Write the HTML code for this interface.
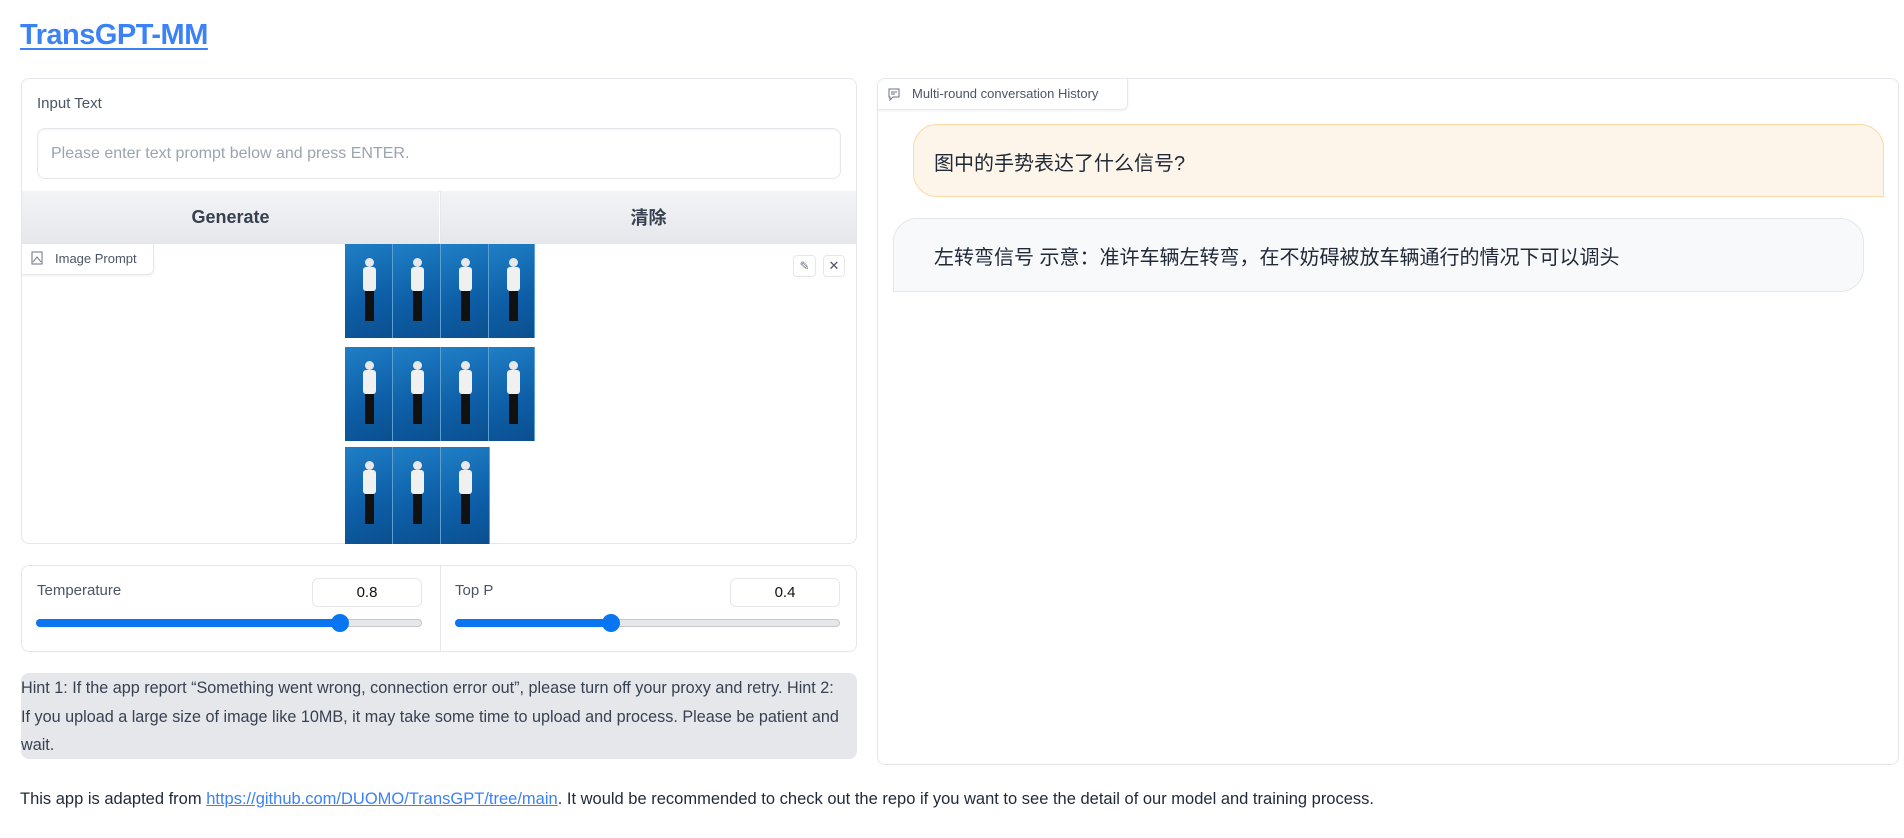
<!DOCTYPE html>
<html><head><meta charset="utf-8"><style>
*{box-sizing:border-box;margin:0;padding:0}
body{width:1904px;height:838px;background:#fff;font-family:"Liberation Sans","Noto Sans CJK SC",sans-serif;color:#1f2937;position:relative;overflow:hidden}
.abs{position:absolute}
h1{position:absolute;left:20px;top:19px;font-size:29px;font-weight:bold;color:#3b82f6;text-decoration:underline;text-underline-offset:4px;letter-spacing:-0.5px}
.panel{position:absolute;border:1px solid #e5e7eb;border-radius:8px;background:#fff}
.lbl{font-size:15px;color:#4b5563}
.btn{position:absolute;top:191px;height:52px;background:linear-gradient(#f3f4f6,#e5e7eb);display:flex;align-items:center;justify-content:center;font-size:18px;font-weight:bold;color:#374151}
.img{position:absolute;width:48px;background:linear-gradient(160deg,#1f7fc6,#0d5ea6 60%,#0b4f8f);overflow:hidden;border-right:1px solid #5aa0d0}
.fig{position:absolute;left:18px;top:14px;width:13px;height:60px}
.fig .h{position:absolute;left:2px;top:0;width:9px;height:9px;border-radius:50%;background:#e8e8e8}
.fig .b{position:absolute;left:0;top:9px;width:13px;height:24px;background:#f0f0f0;border-radius:3px}
.fig .l{position:absolute;left:2px;top:33px;width:9px;height:30px;background:#111}
.num{position:absolute;width:110px;height:29px;border:1px solid #e5e7eb;border-radius:6px;text-align:center;font-size:15px;line-height:28px;color:#111}
.track{position:absolute;height:8px;border-radius:4px;background:#e5e7eb;border:1px solid #c8c8c8}
.fill{position:absolute;height:8px;border-radius:4px;background:#0a75f0}
.thumb{position:absolute;width:18px;height:18px;border-radius:50%;background:#0a75f0}
</style></head><body>
<h1>TransGPT-MM</h1>

<div class="panel" style="left:21px;top:78px;width:836px;height:466px;overflow:hidden">
  <div class="lbl abs" style="left:15px;top:16px">Input Text</div>
  <div class="abs" style="left:15px;top:49px;width:804px;height:51px;border:1px solid #e5e7eb;border-radius:8px;box-shadow:inset 0 1px 2px rgba(0,0,0,.05);font-size:16px;color:#9ca3af;padding:16px 13px">Please enter text prompt below and press ENTER.</div>
  <div class="abs" style="left:0;top:112px;width:836px;height:1px;background:#e5e7eb"></div>
</div>
<div class="btn" style="left:22px;width:417px">Generate</div>
<div class="btn" style="left:440px;width:416px;border-left:1px solid #e5e7eb">清除</div>
<div class="abs" style="left:21px;top:243px;width:836px;height:1px;background:#e5e7eb"></div>
<div class="abs" style="left:21px;top:244px;width:133px;height:31px;border:1px solid #e5e7eb;border-top:none;border-left:none;border-radius:0 0 6px 0;box-shadow:0 1px 2px rgba(0,0,0,.06);font-size:13px;color:#4b5563;padding:7px 0 0 34px">Image Prompt</div>
<svg class="abs" style="left:31px;top:251px" width="12" height="14" viewBox="0 0 12 14"><rect x="1" y="1" width="10" height="12" fill="none" stroke="#6b7280"/><path d="M2 11 L6 6 L10 11" fill="none" stroke="#6b7280"/></svg>
<div class="abs" style="left:793px;top:255px;width:23px;height:22px;border:1px solid #e5e7eb;border-radius:4px;font-size:12px;color:#6b7280;text-align:center;line-height:20px">✎</div>
<div class="abs" style="left:823px;top:255px;width:22px;height:22px;border:1px solid #e5e7eb;border-radius:4px;font-size:13px;color:#4b5563;text-align:center;line-height:20px">✕</div>

<div class="img" style="left:345px;top:244px;height:94px"><div class="fig"><div class="h"></div><div class="b"></div><div class="l"></div></div></div>
<div class="img" style="left:393px;top:244px;height:94px"><div class="fig"><div class="h"></div><div class="b"></div><div class="l"></div></div></div>
<div class="img" style="left:441px;top:244px;height:94px"><div class="fig"><div class="h"></div><div class="b"></div><div class="l"></div></div></div>
<div class="img" style="left:489px;top:244px;height:94px;width:46px"><div class="fig"><div class="h"></div><div class="b"></div><div class="l"></div></div></div>
<div class="img" style="left:345px;top:347px;height:94px"><div class="fig"><div class="h"></div><div class="b"></div><div class="l"></div></div></div>
<div class="img" style="left:393px;top:347px;height:94px"><div class="fig"><div class="h"></div><div class="b"></div><div class="l"></div></div></div>
<div class="img" style="left:441px;top:347px;height:94px"><div class="fig"><div class="h"></div><div class="b"></div><div class="l"></div></div></div>
<div class="img" style="left:489px;top:347px;height:94px;width:46px"><div class="fig"><div class="h"></div><div class="b"></div><div class="l"></div></div></div>
<div class="img" style="left:345px;top:447px;height:97px"><div class="fig"><div class="h"></div><div class="b"></div><div class="l"></div></div></div>
<div class="img" style="left:393px;top:447px;height:97px"><div class="fig"><div class="h"></div><div class="b"></div><div class="l"></div></div></div>
<div class="img" style="left:441px;top:447px;height:97px;width:49px"><div class="fig"><div class="h"></div><div class="b"></div><div class="l"></div></div></div>

<div class="panel" style="left:21px;top:565px;width:836px;height:87px">
  <div class="abs" style="left:418px;top:0;width:1px;height:86px;background:#e5e7eb"></div>
  <div class="lbl abs" style="left:15px;top:16px">Temperature</div>
  <div class="lbl abs" style="left:433px;top:16px">Top P</div>
</div>
<div class="num" style="left:312px;top:578px">0.8</div>
<div class="num" style="left:730px;top:578px">0.4</div>
<div class="track" style="left:36px;top:619px;width:386px"></div>
<div class="fill" style="left:36px;top:619px;width:305px"></div>
<div class="thumb" style="left:331px;top:614px"></div>
<div class="track" style="left:455px;top:619px;width:385px"></div>
<div class="fill" style="left:455px;top:619px;width:157px"></div>
<div class="thumb" style="left:602px;top:614px"></div>

<div class="abs" style="left:21px;top:673px;width:836px;height:86px;background:#e5e7eb;border-radius:8px;font-size:16.2px;line-height:28.5px;color:#374151;padding:1px 0 0 0;white-space:nowrap;overflow:hidden">Hint 1: If the app report “Something went wrong, connection error out”, please turn off your proxy and retry. Hint 2:<br>If you upload a large size of image like 10MB, it may take some time to upload and process. Please be patient and<br>wait.</div>

<div class="abs" style="left:20px;top:790px;font-size:16.5px;color:#1f2937;white-space:nowrap">This app is adapted from <span style="color:#3b82f6;text-decoration:underline">https://github.com/DUOMO/TransGPT/tree/main</span>. It would be recommended to check out the repo if you want to see the detail of our model and training process.</div>

<div class="panel" style="left:877px;top:78px;width:1022px;height:687px"></div>
<div class="abs" style="left:877px;top:78px;width:251px;height:32px;border:1px solid #e5e7eb;border-top:none;border-left:none;border-radius:0 0 6px 0;box-shadow:0 1px 2px rgba(0,0,0,.06);font-size:13px;color:#4b5563;padding:8px 0 0 35px">Multi-round conversation History</div>
<svg class="abs" style="left:888px;top:88px" width="12" height="13" viewBox="0 0 12 13"><path d="M1 1 H11 V9 H5 L2 12 V9 H1 Z" fill="none" stroke="#6b7280"/><path d="M3 4 H9 M3 6 H7" stroke="#6b7280"/></svg>
<div class="abs" style="left:913px;top:124px;width:971px;height:73px;background:#fef5ea;border:1px solid #fcd9a5;border-radius:24px 24px 0 24px;font-size:20px;color:#1f2937;padding:22px 0 0 20px">图中的手势表达了什么信号?</div>
<div class="abs" style="left:893px;top:218px;width:971px;height:74px;background:#f8f9fb;border:1px solid #e5e7eb;border-radius:24px 24px 24px 0;font-size:20px;color:#1f2937;padding:22px 0 0 40px">左转弯信号 示意：准许车辆左转弯，在不妨碍被放车辆通行的情况下可以调头</div>
</body></html>
